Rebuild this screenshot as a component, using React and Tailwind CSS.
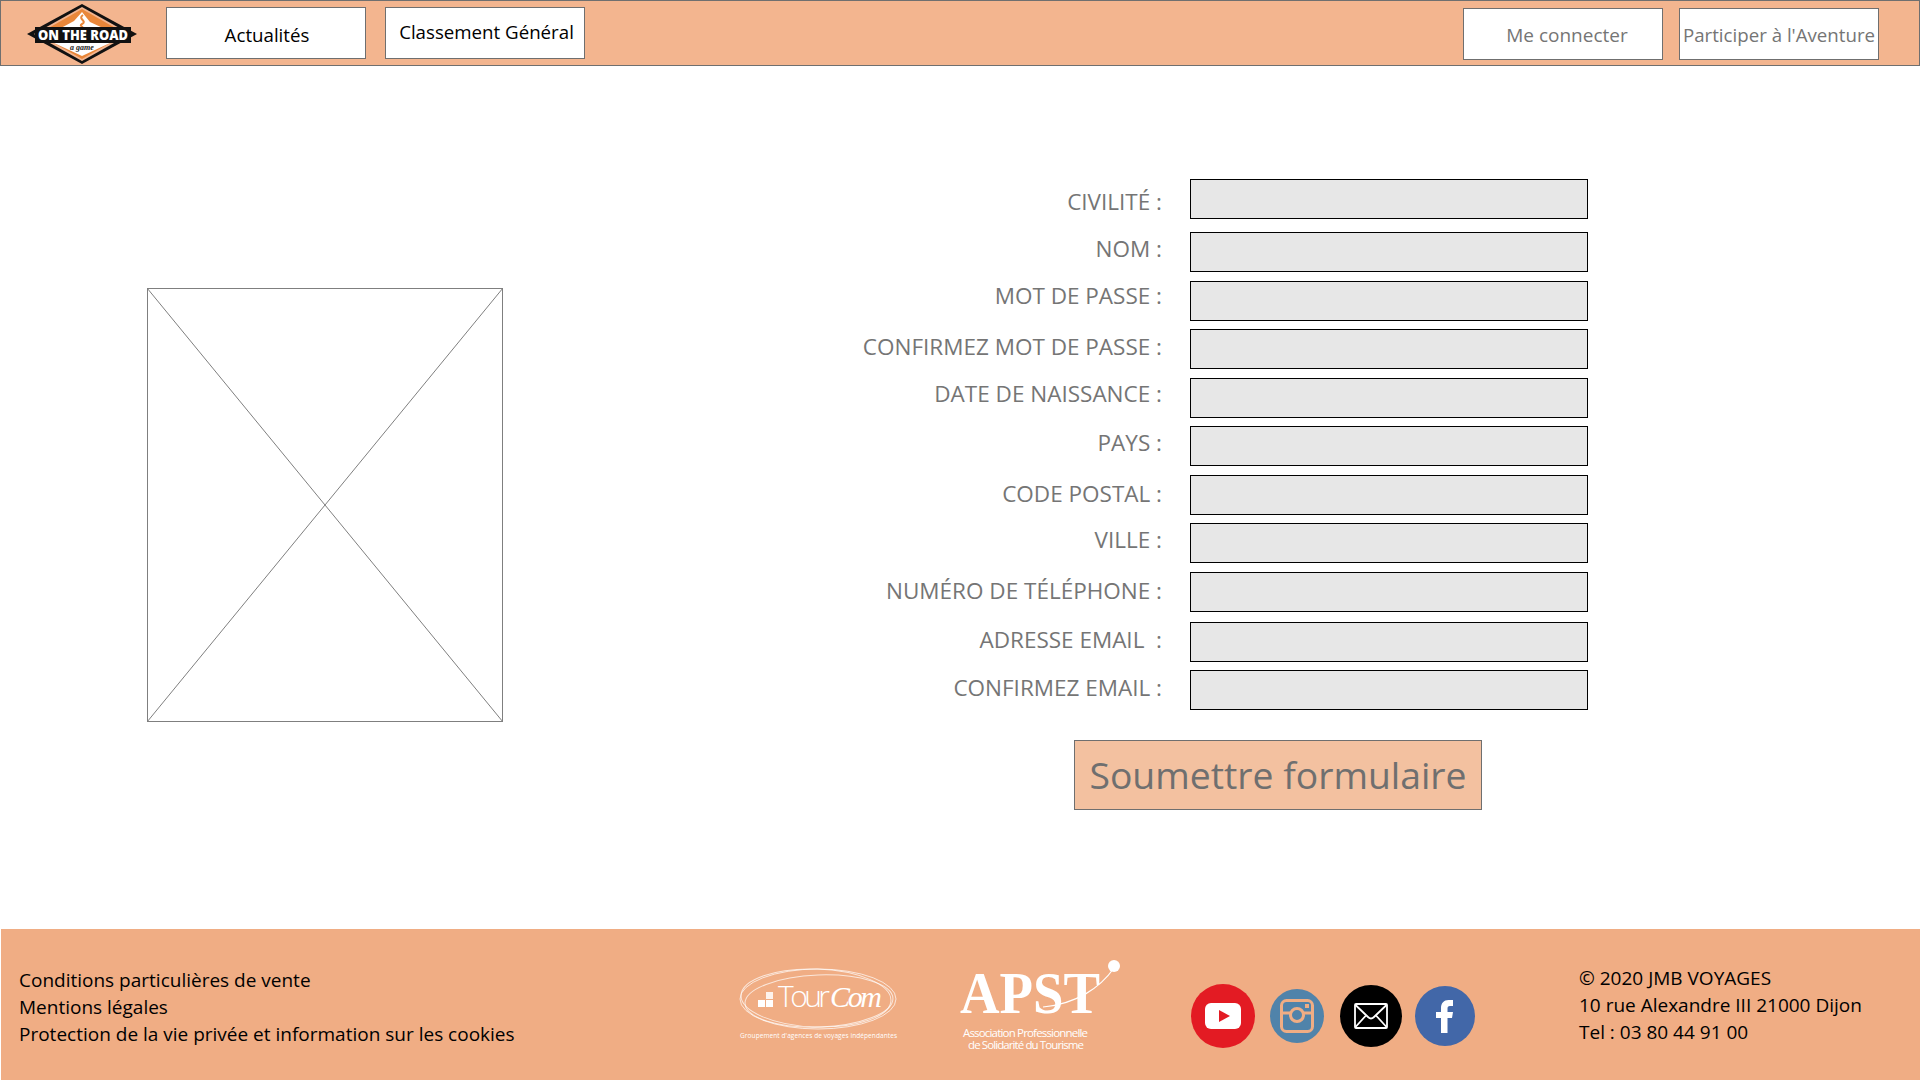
const rows = [
  { label: 'CIVILITÉ :', gap: 'mt-0', pad: 'pt-[13px]' },
  { label: 'NOM :', gap: 'mt-[13px]', pad: 'pt-[7px]' },
  { label: 'MOT DE PASSE :', gap: 'mt-[9px]', pad: 'pt-[5px]' },
  { label: 'CONFIRMEZ MOT DE PASSE :', gap: 'mt-[8px]', pad: 'pt-[8px]' },
  { label: 'DATE DE NAISSANCE :', gap: 'mt-[9px]', pad: 'pt-[6px]' },
  { label: 'PAYS :', gap: 'mt-[8px]', pad: 'pt-[7px]' },
  { label: 'CODE POSTAL :', gap: 'mt-[9px]', pad: 'pt-[9px]' },
  { label: 'VILLE :', gap: 'mt-[8px]', pad: 'pt-[7px]' },
  { label: 'NUMÉRO DE TÉLÉPHONE :', gap: 'mt-[9px]', pad: 'pt-[9px]' },
  { label: 'ADRESSE EMAIL  :', gap: 'mt-[10px]', pad: 'pt-[8px]' },
  { label: 'CONFIRMEZ EMAIL :', gap: 'mt-[8px]', pad: 'pt-[8px]' },
];

function Logo() {
  return (
    <svg width="112" height="62" viewBox="0 0 112 62" className="shrink-0">
      <polygon points="55,1 110,31 55,61 0,31" fill="#111" />
      <polygon points="55,4 103,31 55,58 7,31" fill="#f3b58f" />
      <polygon points="55,6 99,31 55,56 11,31" fill="#e9873a" />
      <path d="M55 9 L63 19 L76 25 L34 25 L47 18 Z" fill="#fff" />
      <path d="M56 12 C50 16 61 18 55 21 C51 23 58 24 55 26" fill="none" stroke="#e9873a" strokeWidth="2" />
      <polygon points="27,40 83,40 55,53" fill="#fff" />
      <rect x="8" y="24" width="96" height="16" fill="#111" />
      <text x="56" y="37" textAnchor="middle" fontSize="14" fontWeight="800" fill="#fff" fontFamily="'Open Sans', sans-serif" textLength="90" lengthAdjust="spacingAndGlyphs">ON THE ROAD</text>
      <text x="55" y="47" textAnchor="middle" fontSize="8" fontStyle="italic" fontWeight="700" fill="#222" fontFamily="'Liberation Serif', serif">a game</text>
    </svg>
  );
}

function TourCom() {
  return (
    <svg width="162" height="76" viewBox="0 0 162 76" className="shrink-0">
      <g fill="none" stroke="#fff" strokeOpacity="0.7">
        <ellipse cx="80" cy="32" rx="78" ry="30" />
        <ellipse cx="81" cy="34" rx="74" ry="26" transform="rotate(-2 81 34)" />
        <ellipse cx="78" cy="31" rx="75" ry="29" transform="rotate(2 78 31)" />
      </g>
      <g fill="#fff">
        <rect x="20" y="33" width="7" height="7" />
        <rect x="28" y="33" width="7" height="7" />
        <rect x="28" y="25" width="7" height="7" opacity="0.85" />
      </g>
      <text x="40" y="40" fontSize="30" fill="#fff" fontFamily="'Open Sans', sans-serif" fontWeight="300" textLength="52">Tour</text>
      <text x="92" y="40" fontSize="30" fill="#fff" fontStyle="italic" fontFamily="'Liberation Serif', serif" textLength="52">Com</text>
      <text x="2" y="71" fontSize="6.5" fill="#fff" fontFamily="'Open Sans', sans-serif" textLength="157">Groupement d'agences de voyages indépendantes</text>
    </svg>
  );
}

function Apst() {
  return (
    <svg width="166" height="96" viewBox="0 0 166 96" className="shrink-0">
      <text x="0" y="55" fontSize="60" fontWeight="700" fill="#fff" fontFamily="'Liberation Serif', serif" textLength="140" lengthAdjust="spacingAndGlyphs">APST</text>
      <path d="M83 49 C116 46 140 30 154 10" fill="none" stroke="#fff" strokeWidth="1.2" />
      <circle cx="154" cy="8" r="6" fill="#fff" />
      <text x="3" y="79" fontSize="11.5" fill="#fff" fontFamily="'Open Sans', sans-serif" textLength="125">Association Professionnelle</text>
      <text x="8" y="91" fontSize="11.5" fill="#fff" fontFamily="'Open Sans', sans-serif" textLength="116">de Solidarité du Tourisme</text>
    </svg>
  );
}

function Socials() {
  return (
    <div className="flex items-center ml-[65px] mt-[55px]">
      <div className="w-[64px] h-[64px] rounded-full bg-[#e31b23] flex items-center justify-center">
        <svg width="36" height="26" viewBox="0 0 36 26">
          <rect width="36" height="26" rx="6" fill="#fff" />
          <polygon points="14,7 25,13 14,19" fill="#e31b23" />
        </svg>
      </div>
      <div className="w-[54px] h-[54px] ml-[15px] rounded-full bg-[#5083aa] flex items-center justify-center">
        <svg width="34" height="34" viewBox="0 0 34 34" fill="none" stroke="#f0ad84" strokeWidth="3">
          <rect x="1.5" y="1.5" width="31" height="31" rx="5" />
          <path d="M2 14 H10 M24 14 H32" />
          <circle cx="17" cy="16" r="6.5" />
          <rect x="25" y="5" width="4" height="4" fill="#f0ad84" stroke="none" />
        </svg>
      </div>
      <div className="w-[62px] h-[62px] ml-[16px] rounded-full bg-black flex items-center justify-center">
        <svg width="34" height="26" viewBox="0 0 34 26" fill="none" stroke="#fff" strokeWidth="1.8">
          <rect x="1" y="1" width="32" height="24" rx="1" />
          <path d="M1.5 2 L14 14 C16 16 18 16 20 14 L32.5 2" />
          <path d="M1.5 24 L12 12.5 M32.5 24 L22 12.5" />
        </svg>
      </div>
      <div className="w-[60px] h-[60px] ml-[13px] rounded-full bg-[#4267a8] flex items-center justify-center">
        <svg width="18" height="33" viewBox="0 0 18 33">
          <path d="M5 33 V18 H0 V12 H5 V8 C5 3 8 0 12.5 0 H17 V6 H14 C12 6 11.5 7 11.5 8.5 V12 H17 L16 18 H11.5 V33 Z" fill="#fff" />
        </svg>
      </div>
    </div>
  );
}

export default function App() {
  return (
    <div className="w-[1920px] h-[1080px] flex flex-col bg-white overflow-hidden font-['Open_Sans','Noto_Sans',sans-serif]">
      <header className="h-[66px] shrink-0 flex items-start bg-[#f3b58f] border border-[#6f6f6f] pl-[26px]">
        <div className="mt-[2px]"><Logo /></div>
        <button className="w-[200px] h-[52px] ml-[27px] mt-[6px] bg-white border border-[#6f6f6f] text-[18.7px] text-black pt-[4px] pl-[2px]">Actualités</button>
        <button className="w-[200px] h-[52px] ml-[19px] mt-[6px] bg-white border border-[#6f6f6f] text-[18.7px] text-black pb-[1px] pl-[3px]">Classement Général</button>
        <button className="w-[200px] h-[52px] ml-auto mt-[7px] bg-white border border-[#6f6f6f] text-[19px] text-[#757575] pl-[8px] pt-[2px]">Me connecter</button>
        <button className="w-[200px] h-[52px] ml-[16px] mr-[40px] mt-[7px] bg-white border border-[#6f6f6f] text-[18.7px] text-[#757575] pt-[2px] whitespace-nowrap">Participer à l'Aventure</button>
      </header>

      <main className="flex-1 flex items-start">
        <svg width="356" height="434" viewBox="0 0 356 434" className="ml-[147px] mt-[222px] shrink-0">
          <rect x="0.5" y="0.5" width="355" height="433" fill="#fff" stroke="#7f7f7f" />
          <path d="M0 0 L356 434 M356 0 L0 434" stroke="#7f7f7f" strokeWidth="1" />
        </svg>
        <div className="ml-[259px] mt-[113px] flex flex-col items-start">
          {rows.map((row) => (
            <div key={row.label} className={`flex items-start ${row.gap}`}>
              <label className={`w-[400px] text-right text-[22.5px] leading-5 text-[#757575] whitespace-pre ${row.pad}`}>{row.label}</label>
              <input className="w-[398px] h-[40px] ml-[28px] bg-[#e7e7e7] border border-black" />
            </div>
          ))}
          <button className="w-[408px] h-[70px] ml-[312px] mt-[30px] bg-[#f3c1a0] border border-[#6f6f6f] text-[37.3px] text-[#6f6f6f]">Soumettre formulaire</button>
        </div>
      </main>

      <footer className="h-[151px] shrink-0 ml-px flex items-start bg-[#f0ad84]">
        <div className="w-[737px] pl-[18px] pt-[38px] text-[19px] leading-[27px] text-black">
          <p>Conditions particulières de vente</p>
          <p>Mentions légales</p>
          <p>Protection de la vie privée et information sur les cookies</p>
        </div>
        <div className="mt-[38px]"><TourCom /></div>
        <div className="ml-[60px] mt-[29px]"><Apst /></div>
        <Socials />
        <div className="ml-[104px] pt-[36px] text-[19px] leading-[27px] text-black whitespace-nowrap">
          <p>© 2020 JMB VOYAGES</p>
          <p>10 rue Alexandre III 21000 Dijon</p>
          <p>Tel : 03 80 44 91 00</p>
        </div>
      </footer>
    </div>
  );
}
